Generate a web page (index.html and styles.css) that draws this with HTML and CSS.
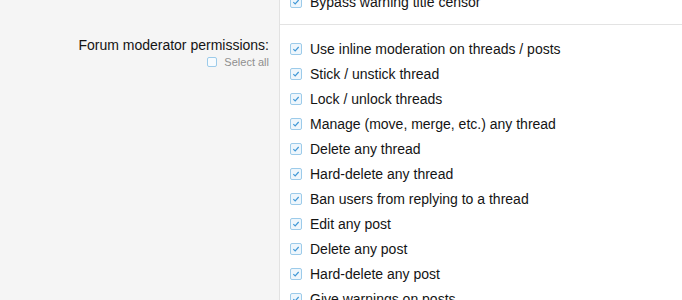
FILE: index.html
```html
<!DOCTYPE html>
<html>
<head>
<meta charset="utf-8">
<link rel="stylesheet" href="styles.css">
</head>
<body>
<div class="form">
  <div class="row row-top">
    <div class="label-col"></div>
    <div class="input-col">
      <ul class="checks checks-top">
        <li><span class="box"><svg viewBox="0 0 12 12"><path d="M2.8 6.2 5 8.3 9.2 3.6"/></svg></span>Bypass warning title censor</li>
      </ul>
    </div>
  </div>
  <div class="row">
    <div class="label-col">
      <div class="label">Forum moderator permissions:</div>
      <div class="select-all"><span class="box box-small"></span>Select all</div>
    </div>
    <div class="input-col">
      <ul class="checks">
        <li><span class="box"><svg viewBox="0 0 12 12"><path d="M2.8 6.2 5 8.3 9.2 3.6"/></svg></span>Use inline moderation on threads / posts</li>
        <li><span class="box"><svg viewBox="0 0 12 12"><path d="M2.8 6.2 5 8.3 9.2 3.6"/></svg></span>Stick / unstick thread</li>
        <li><span class="box"><svg viewBox="0 0 12 12"><path d="M2.8 6.2 5 8.3 9.2 3.6"/></svg></span>Lock / unlock threads</li>
        <li><span class="box"><svg viewBox="0 0 12 12"><path d="M2.8 6.2 5 8.3 9.2 3.6"/></svg></span>Manage (move, merge, etc.) any thread</li>
        <li><span class="box"><svg viewBox="0 0 12 12"><path d="M2.8 6.2 5 8.3 9.2 3.6"/></svg></span>Delete any thread</li>
        <li><span class="box"><svg viewBox="0 0 12 12"><path d="M2.8 6.2 5 8.3 9.2 3.6"/></svg></span>Hard-delete any thread</li>
        <li><span class="box"><svg viewBox="0 0 12 12"><path d="M2.8 6.2 5 8.3 9.2 3.6"/></svg></span>Ban users from replying to a thread</li>
        <li><span class="box"><svg viewBox="0 0 12 12"><path d="M2.8 6.2 5 8.3 9.2 3.6"/></svg></span>Edit any post</li>
        <li><span class="box"><svg viewBox="0 0 12 12"><path d="M2.8 6.2 5 8.3 9.2 3.6"/></svg></span>Delete any post</li>
        <li><span class="box"><svg viewBox="0 0 12 12"><path d="M2.8 6.2 5 8.3 9.2 3.6"/></svg></span>Hard-delete any post</li>
        <li><span class="box"><svg viewBox="0 0 12 12"><path d="M2.8 6.2 5 8.3 9.2 3.6"/></svg></span>Give warnings on posts</li>
      </ul>
    </div>
  </div>
</div>
</body>
</html>
```

FILE: styles.css
```css
html, body {
  margin: 0;
  padding: 0;
  background: #ffffff;
  height: 100%;
  overflow: hidden;
}
body {
  font-family: "Liberation Sans", Arial, sans-serif;
  font-size: 14px;
  color: #141414;
}
.form {
  display: flex;
  flex-direction: column;
  min-height: 100%;
}
.row {
  display: flex;
}
.row:last-child {
  flex: 1;
}
.label-col {
  width: 280px;
  flex: none;
  background: #f5f5f5;
  border-right: 1px solid #e2e2e2;
  box-sizing: border-box;
  padding: 10px 10px 0 0;
  text-align: right;
}
.input-col {
  flex: 1;
}
.row-top .input-col {
  border-bottom: 1px solid #e3e3e3;
  height: 24px;
  overflow: hidden;
}
.row-top .label-col {
  padding: 0;
}
.checks {
  list-style: none;
  margin: 0;
  padding: 11px 0 0 10px;
}
.checks-top {
  padding-top: 0;
  margin-top: -11px;
}
.checks li {
  display: flex;
  align-items: center;
  height: 25px;
  white-space: nowrap;
}
.box {
  width: 12px;
  height: 12px;
  box-sizing: border-box;
  border: 1px solid #9ccbea;
  border-radius: 2px;
  background: #eef6fc;
  margin-right: 8px;
  flex: none;
  display: flex;
}
.box svg {
  width: 10px;
  height: 10px;
  fill: none;
  stroke: #3f97d6;
  stroke-width: 1.4;
}
.label {
  line-height: 18px;
  padding-top: 1px;
}
.select-all {
  display: flex;
  justify-content: flex-end;
  align-items: center;
  font-size: 11px;
  color: #8f8f8f;
  line-height: 14px;
  margin-top: 1px;
}
.box-small {
  width: 10px;
  height: 10px;
  margin-right: 7px;
  background: #f7fbfe;
}
```
